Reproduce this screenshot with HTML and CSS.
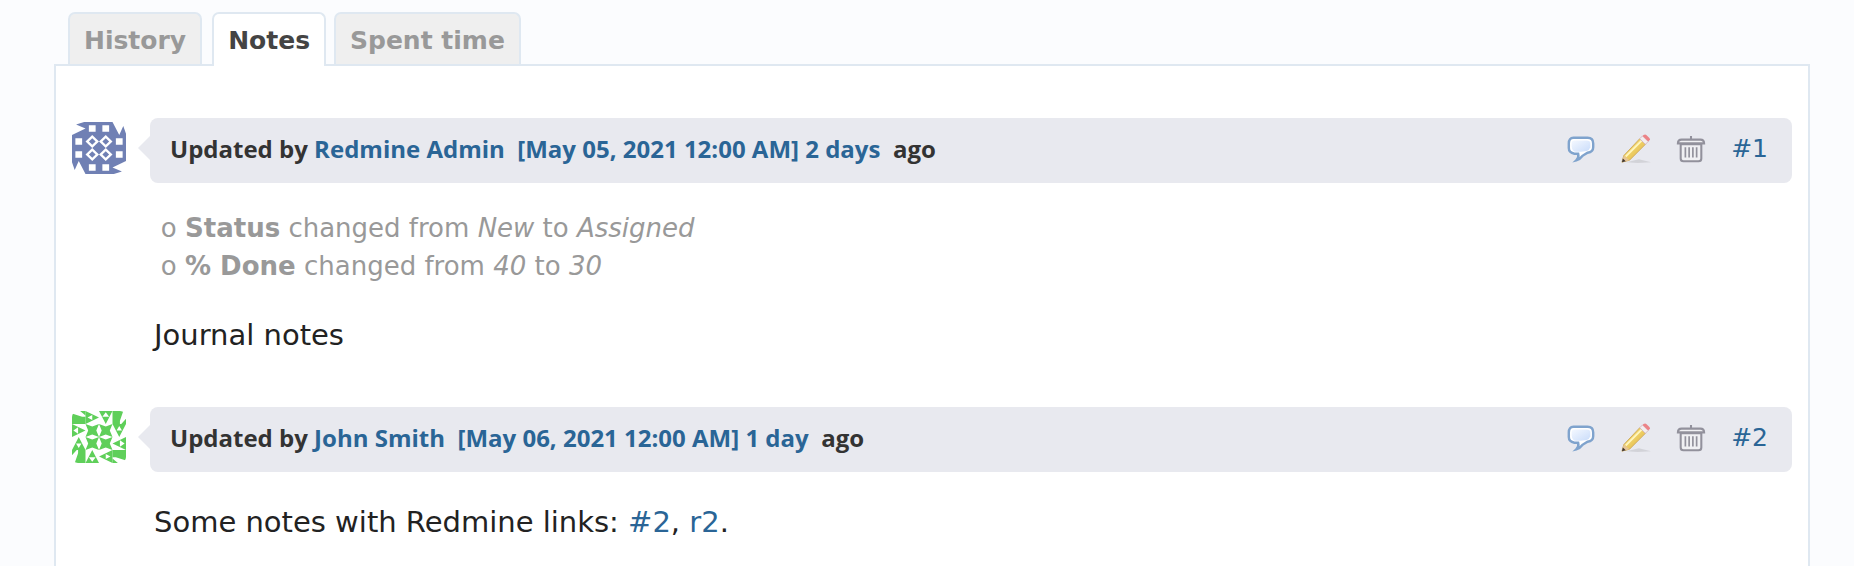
FILE: index.html
```
<!DOCTYPE html>
<html lang="en">
<head>
<meta charset="utf-8">
<title>Issue notes</title>
<link rel="stylesheet" href="styles.css">
</head>
<body>
<svg class="defs" aria-hidden="true">
  <defs>
    <linearGradient id="bubble-fill" x1="0" y1="0" x2="1" y2="1">
      <stop offset="0" stop-color="#f4f8ff"/><stop offset="1" stop-color="#c9dcfa"/>
    </linearGradient>
    <linearGradient id="pencil-fill" x1="0" y1="0" x2="1" y2="1">
      <stop offset="0" stop-color="#fbea8a"/><stop offset="1" stop-color="#dfb13c"/>
    </linearGradient>
    <symbol id="icon-comment" viewBox="0 0 32 32">
      <path d="M8 4H23Q29 4 29 10V14Q29 19 23 20L18 23Q15 27 11 28Q14 25 13 21H9Q3 20 3 15V10Q3 4 8 4Z" fill="#fff" stroke="#7fa3cd" stroke-width="2.6"/>
      <path d="M9 7H22Q26 7 26 10V14Q25 17 22 18L16 19Q9 19 8 18Q6 16 6 13V10Q6 7 9 7Z" fill="url(#bubble-fill)"/>
    </symbol>
    <symbol id="icon-edit" viewBox="0 0 32 32">
      <path d="M6 30L19 27L32 30L18 31Z" fill="#c9c9cf" opacity=".7"/>
      <path d="M3 23L20 5L26 11L9 28L1 30Z" fill="url(#pencil-fill)" stroke="#cda95a" stroke-width="1"/>
      <path d="M5 24L22 7" stroke="#fff6bd" stroke-width="2" fill="none"/>
      <path d="M20 5L23 2L29 8L26 11Z" fill="#f3eef0" stroke="#d3b9bf" stroke-width="1"/>
      <path d="M23 2L24 1Q26 0 27 1L30 4Q32 6 30 7L29 8Z" fill="#ec8387"/>
      <path d="M3 23L9 28L1 30Z" fill="#e6c596"/>
      <path d="M2 26L5 29L1 30Z" fill="#3d3432"/>
    </symbol>
    <symbol id="icon-delete" viewBox="0 0 32 32">
      <path d="M16 2V6M6 6H26Q30 6 30 10H2Q2 6 6 6Z" fill="#f0f0f3" stroke="#92919c" stroke-width="2.2"/>
      <path d="M5 11H27V26Q27 29 24 29H8Q5 29 5 26Z" fill="#f0f0f3" stroke="#92919c" stroke-width="2.2"/>
      <path d="M10 14V25M14 14V25M18 14V25M22 14V25" stroke="#92919c" stroke-width="1.8"/>
    </symbol>
    <g id="quarter-blue">
      <path d="M0 0H18L6 4L20 10L0 20Z"/>
      <path d="M25 5H35V15H25ZM45 5H55V15H45Z"/>
      <path fill-rule="evenodd" d="M30 20L40 30L30 40L20 30ZM30 25L25 30L30 35L35 30Z"/>
    </g>
    <g id="quarter-green">
      <path d="M0 4L15 9H20V20H0ZM12 0H20V7Z"/>
      <path fill-rule="evenodd" d="M20 0L40 10L20 20ZM23 10L30 14V6Z"/>
      <path fill-rule="evenodd" d="M40 0H60L50 20ZM45 9H55L50 2Z"/>
      <path d="M20 20L30 24L40 20L36 30L40 40L30 36L20 40L24 30Z"/>
    </g>
  </defs>
</svg>
<main class="page">
  <nav class="tabs" aria-label="Issue history">
    <a class="tab" href="#history">History</a>
    <a class="tab selected" href="#notes" aria-current="page">Notes</a>
    <a class="tab" href="#time">Spent time</a>
  </nav>
  <section class="panel">
    <article class="journal">
      <svg class="avatar" viewBox="0 0 80 80" preserveAspectRatio="none" role="img" aria-label="Redmine Admin">
        <rect width="80" height="80" fill="#7080b4"/>
        <g fill="#fff">
          <use href="#quarter-blue"/>
          <use href="#quarter-blue" transform="rotate(90 40 40)"/>
          <use href="#quarter-blue" transform="rotate(180 40 40)"/>
          <use href="#quarter-blue" transform="rotate(270 40 40)"/>
        </g>
      </svg>
      <div class="entry">
        <header class="bar">
          <h4 class="title">Updated by <a href="#admin">Redmine Admin</a>&nbsp; <a href="#date">[May 05, 2021 12:00 AM] 2 days</a>&nbsp; ago</h4>
          <div class="actions">
            <button type="button" aria-label="Quote"><svg><use href="#icon-comment"/></svg></button>
            <button type="button" aria-label="Edit"><svg><use href="#icon-edit"/></svg></button>
            <button type="button" aria-label="Delete"><svg><use href="#icon-delete"/></svg></button>
            <a href="#note-1">#1</a>
          </div>
        </header>
        <ul class="details">
          <li><strong>Status</strong> changed from <i>New</i> to <i>Assigned</i></li>
          <li><strong>% Done</strong> changed from <i>40</i> to <i>30</i></li>
        </ul>
        <p class="note">Journal notes</p>
      </div>
    </article>
    <article class="journal">
      <svg class="avatar rounded" viewBox="0 0 80 80" preserveAspectRatio="none" role="img" aria-label="John Smith">
        <rect width="80" height="80" fill="#fff"/>
        <g fill="#5fcf5a">
          <use href="#quarter-green"/>
          <use href="#quarter-green" transform="rotate(90 40 40)"/>
          <use href="#quarter-green" transform="rotate(180 40 40)"/>
          <use href="#quarter-green" transform="rotate(270 40 40)"/>
        </g>
      </svg>
      <div class="entry">
        <header class="bar">
          <h4 class="title">Updated by <a href="#john">John Smith</a>&nbsp; <a href="#date">[May 06, 2021 12:00 AM] 1 day</a>&nbsp; ago</h4>
          <div class="actions">
            <button type="button" aria-label="Quote"><svg><use href="#icon-comment"/></svg></button>
            <button type="button" aria-label="Edit"><svg><use href="#icon-edit"/></svg></button>
            <button type="button" aria-label="Delete"><svg><use href="#icon-delete"/></svg></button>
            <a href="#note-2">#2</a>
          </div>
        </header>
        <p class="note">Some notes with Redmine links: <a href="#2">#2</a>, <a href="#r2">r2</a>.</p>
      </div>
    </article>
  </section>
</main>
</body>
</html>
```
FILE: styles.css
```
* { box-sizing: border-box; }
body {
  margin: 0;
  background: #fbfcfe;
  color: #222;
  font-family: Verdana, "DejaVu Sans", sans-serif;
  font-size: 29px;
}
a { color: #2a6596; text-decoration: none; }
.defs { position: absolute; width: 0; height: 0; }
.page {
  display: flex;
  flex-direction: column;
  height: 100vh;
  overflow: hidden;
  padding: 12px 44px 0 54px;
}
.tabs { display: flex; align-items: flex-start; padding-left: 14px; }
.tab {
  height: 52px;
  padding: 0 14px;
  border: 2px solid #dfe8f1;
  border-bottom: 0;
  border-radius: 7px 7px 0 0;
  background: #efefef;
  color: #999;
  font-size: 25px;
  font-weight: 700;
  line-height: 54px;
  margin-right: 8px;
}
.tab.selected {
  height: 54px;
  margin: 0 8px -2px 2px;
  background: #fff;
  color: #444;
  z-index: 1;
}
.panel {
  flex: 1 0 auto;
  padding: 52px 16px 0;
  border: 2px solid #dfe8f1;
  border-bottom: 0;
  background: #fff;
}
.journal { display: flex; gap: 24px; margin-bottom: 52px; }
.avatar { flex: none; width: 54px; height: 52px; margin-top: 4px; }
.avatar.rounded { border-radius: 6px; }
.entry { flex: 1; }
.bar {
  position: relative;
  display: flex;
  align-items: center;
  justify-content: space-between;
  height: 65px;
  padding: 0 24px 4px 20px;
  border-radius: 8px;
  background: #e8e9ef;
}
.bar::before {
  content: "";
  position: absolute;
  left: -12px;
  top: 18px;
  border: 12px solid transparent;
  border-left: 0;
  border-right-color: #e8e9ef;
}
.title {
  margin: 0;
  color: #333;
  font-family: "Trebuchet MS", "Open Sans", sans-serif;
  font-size: 24px;
  font-weight: 700;
}
.actions { display: flex; align-items: center; gap: 25px; font-size: 25px; }
.actions button { display: flex; padding: 0; border: 0; background: none; }
.actions svg { width: 30px; height: 30px; }
.details {
  margin: 26px 0 0;
  padding: 0 0 0 35px;
  color: #999;
  font-size: 26px;
  line-height: 38px;
  list-style: "o ";
}
.note { margin: 30px 0 0 4px; line-height: 40px; }
```
